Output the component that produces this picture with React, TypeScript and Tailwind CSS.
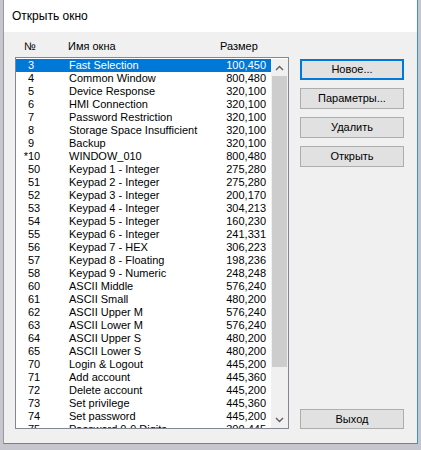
import React from "react";

type Row = { mark?: string; no: string; name: string; size: string };

const rows: Row[] = [
  { no: "3", name: "Fast Selection", size: "100,450" },
  { no: "4", name: "Common Window", size: "800,480" },
  { no: "5", name: "Device Response", size: "320,100" },
  { no: "6", name: "HMI Connection", size: "320,100" },
  { no: "7", name: "Password Restriction", size: "320,100" },
  { no: "8", name: "Storage Space Insufficient", size: "320,100" },
  { no: "9", name: "Backup", size: "320,100" },
  { mark: "*", no: "10", name: "WINDOW_010", size: "800,480" },
  { no: "50", name: "Keypad 1 - Integer", size: "275,280" },
  { no: "51", name: "Keypad 2 - Integer", size: "275,280" },
  { no: "52", name: "Keypad 3 - Integer", size: "200,170" },
  { no: "53", name: "Keypad 4 - Integer", size: "304,213" },
  { no: "54", name: "Keypad 5 - Integer", size: "160,230" },
  { no: "55", name: "Keypad 6 - Integer", size: "241,331" },
  { no: "56", name: "Keypad 7 - HEX", size: "306,223" },
  { no: "57", name: "Keypad 8 - Floating", size: "198,236" },
  { no: "58", name: "Keypad 9 - Numeric", size: "248,248" },
  { no: "60", name: "ASCII Middle", size: "576,240" },
  { no: "61", name: "ASCII Small", size: "480,200" },
  { no: "62", name: "ASCII Upper M", size: "576,240" },
  { no: "63", name: "ASCII Lower M", size: "576,240" },
  { no: "64", name: "ASCII Upper S", size: "480,200" },
  { no: "65", name: "ASCII Lower S", size: "480,200" },
  { no: "70", name: "Login & Logout", size: "445,200" },
  { no: "71", name: "Add account", size: "445,360" },
  { no: "72", name: "Delete account", size: "445,200" },
  { no: "73", name: "Set privilege", size: "445,360" },
  { no: "74", name: "Set password", size: "445,200" },
  { no: "75", name: "Password 0-9 Digits", size: "300,445" },
];

const buttons = ["Новое...", "Параметры...", "Удалить", "Открыть"];

function Chevron({ up }: { up?: boolean }) {
  return (
    <svg width="9" height="6" viewBox="0 0 9 6">
      <path
        d={up ? "M1 5 L4.5 1.5 L8 5" : "M1 1 L4.5 4.5 L8 1"}
        fill="none"
        stroke="#606060"
        strokeWidth="1.4"
      />
    </svg>
  );
}

export default function App() {
  return (
    <div className="flex h-[450px] w-[421px] overflow-hidden bg-[#c6c6ce] pb-[6px] pl-[3px] pr-[3px] font-['Liberation_Sans',sans-serif] text-black">
      <div className="flex flex-1 flex-col border-b border-l border-r border-b-[#3d8fd6] border-l-[#9a9a9a] border-r-[#3d8fd6]">
        <div className="flex h-[33px] items-center bg-white pl-[8px] text-[12px]">Открыть окно</div>

        <div className="flex flex-1 bg-[#f0f0f0] pb-[14px] pl-[11px]">
          <div className="flex flex-col">
            <div className="flex h-[25px] items-center pl-[9px] pt-[3px] text-[11px] leading-[13px]">
              <span className="w-[44px]">№</span>
              <span className="w-[152px]">Имя окна</span>
              <span>Размер</span>
            </div>

            <div className="flex h-[372px] w-[274px] overflow-hidden border border-[#828790] bg-white pt-[1px]">
              <div className="flex w-[255px] flex-col text-[11px] leading-[13px]">
                {rows.map((r, i) => (
                  <div
                    key={r.no}
                    className={
                      i === 0
                        ? "flex h-[13px] shrink-0 items-center bg-[#0078d7] pl-[6px] pr-[5px] text-white"
                        : "flex h-[13px] shrink-0 items-center pl-[6px] pr-[5px]"
                    }
                  >
                    <span className="w-[6px] text-right">{r.mark ?? ""}</span>
                    <span className="w-[41px]">{r.no}</span>
                    <span className="flex-1 whitespace-nowrap">{r.name}</span>
                    <span>{r.size}</span>
                  </div>
                ))}
              </div>

              <div className="flex w-[17px] flex-col bg-[#f0f0f0]">
                <div className="flex h-[17px] items-center justify-center">
                  <Chevron up />
                </div>
                <div className="mx-[1px] h-[291px] bg-[#cdcdcd]" />
                <div className="flex-1" />
                <div className="flex h-[17px] items-center justify-center">
                  <Chevron />
                </div>
              </div>
            </div>
          </div>

          <div className="ml-[11px] flex flex-col pt-[27px]">
            <div className="flex flex-col gap-[8px]">
              {buttons.map((b, i) => (
                <div
                  key={b}
                  className={
                    i === 0
                      ? "flex h-[21px] w-[104px] items-center justify-center border-2 border-[#0078d7] bg-[#e1e1e1] text-[11px]"
                      : "flex h-[21px] w-[104px] items-center justify-center border border-[#adadad] bg-[#e1e1e1] text-[11px]"
                  }
                >
                  {b}
                </div>
              ))}
            </div>
            <div className="flex-1" />
            <div className="flex h-[20px] w-[104px] items-center justify-center border border-[#adadad] bg-[#e1e1e1] text-[11px]">
              Выход
            </div>
          </div>
        </div>
      </div>
    </div>
  );
}
